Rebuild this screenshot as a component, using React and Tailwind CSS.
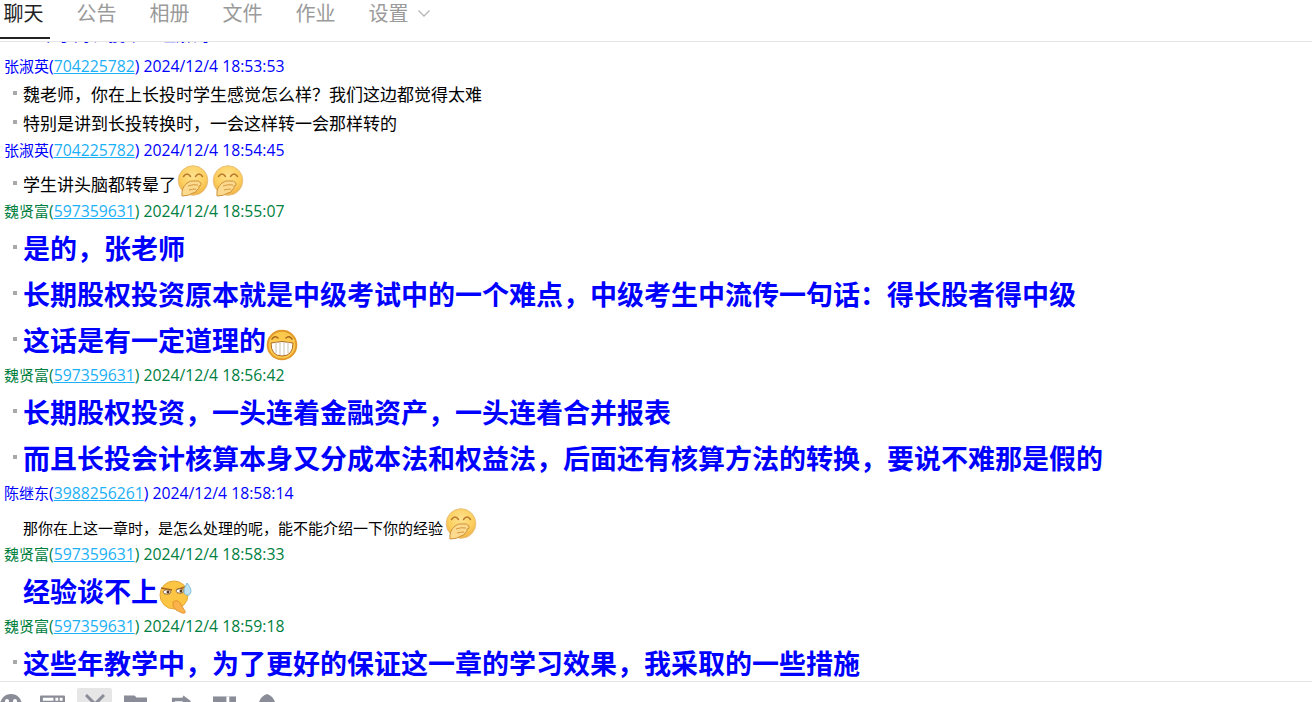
const FONT = "font-['Open_Sans','Noto_Sans_CJK_SC',sans-serif]";

function CoverMouth({ id, className = "" }) {
  return (
    <svg width="32" height="32" viewBox="0 0 32 32" className={`inline-block shrink-0 -translate-y-[4px] ${className}`}>
      <defs>
        <radialGradient id={id} cx="50%" cy="35%" r="65%">
          <stop offset="0%" stopColor="#fee28f" />
          <stop offset="65%" stopColor="#fccf5e" />
          <stop offset="100%" stopColor="#efb044" />
        </radialGradient>
      </defs>
      <circle cx="16" cy="15.500" r="14.800" fill={`url(#${id})`} stroke="#e9c07e" strokeWidth="1" />
      <path d="M6.500 11.500q3.500-5 7 0M18.500 11.500q3.500-5 7 0" fill="none" stroke="#b9772a" strokeWidth="1.500" strokeLinecap="round" />
      <path d="M5 31q-1-8 5-13q4-3 7-2q5-1 7 2q1 3-2 3q1 3-2 4q-1 3-4 3q-4 3-11 3z" fill="#fbd98e" stroke="#cf9339" strokeWidth="1" />
      <path d="M11 21q5-2 10-1M12 25q4-1 7-1" stroke="#cf9339" strokeWidth="0.900" fill="none" />
    </svg>
  );
}

function Grin() {
  return (
    <svg width="32" height="32" viewBox="0 0 32 32" className="inline-block shrink-0 translate-y-[4px]">
      <circle cx="16" cy="16" r="14.300" fill="#fbc94d" stroke="#e19a2a" strokeWidth="2" />
      <path d="M6 10q3-4 6-1M20 9q3-3 6 1" fill="none" stroke="#a8641c" strokeWidth="1.500" strokeLinecap="round" />
      <path d="M5 14q11-3 22 0q0 13-11 13T5 14z" fill="#fff" stroke="#b06a1e" strokeWidth="1" />
      <path d="M10 13v11M14 13v13M18 13v13M22 13v11" stroke="#c9c3b5" strokeWidth="1" />
    </svg>
  );
}

function Think() {
  return (
    <svg width="36" height="36" viewBox="0 0 36 36" className="inline-block shrink-0 translate-y-[4px]">
      <circle cx="16" cy="17" r="14" fill="#fcc544" stroke="#e8a93a" strokeWidth="1" />
      <path d="M3 10l11 2M18 12l9-3" stroke="#a8641c" strokeWidth="1.500" />
      <ellipse cx="9" cy="14" rx="4" ry="2.200" fill="#fff" stroke="#805020" strokeWidth="0.800" />
      <ellipse cx="22" cy="13" rx="4" ry="2.200" fill="#fff" stroke="#805020" strokeWidth="0.800" />
      <circle cx="10" cy="14" r="1.500" fill="#5a3415" />
      <circle cx="23" cy="13" r="1.500" fill="#5a3415" />
      <path d="M29 5q6 7 3 11q-3 3-6-1q-1-4 3-10z" fill="#bfe3f2" stroke="#6fb3d1" strokeWidth="0.800" />
      <path d="M15 24q4-3 7 1l5 8q1 3-3 2l-6-3q-4-3-3-8z" fill="#fbb24a" stroke="#d98a2a" strokeWidth="0.800" />
    </svg>
  );
}

function Header({ name, id, time, color, gap }) {
  return (
    <div className={`h-[24px] ${gap ? "mt-[2px]" : ""} pl-[4px] leading-[25px] text-[15px] ${color} whitespace-pre`}>
      {name}
      <span className="text-[15.750px]">
        (<span className="text-[#1cb0f6] underline">{id}</span>) {time}
      </span>
    </div>
  );
}

function Row({ children, size, h, pt, hidden }) {
  return (
    <div className={`${h} ${pt} pl-[23px] ${size} whitespace-pre`}>
      <div className="relative h-full flex items-center">
        {!hidden && <span className="absolute -left-[10px] top-1/2 -translate-y-[4px] w-[4px] h-[4px] bg-[#a8a8a8]" />}
        {children}
      </div>
    </div>
  );
}

const Big = ({ children, hidden }) => (
  <Row h="h-[46px]" pt="pt-[6px]" size="text-[27px] font-bold text-[#0000ff]" hidden={hidden}>{children}</Row>
);
const Mid = ({ children }) => <Row h="h-[29px]" pt="pt-[4px]" size="text-[17px] text-black">{children}</Row>;

const Tab = ({ children, active }) => (
  <div className={`relative h-[41px] flex items-start w-[50px] pl-[3.500px] mr-[23px] text-[20px] leading-[28px] ${active ? "text-[#222222]" : "text-[#9a9a9a]"}`}>
    <span className="whitespace-pre">{children}</span>
    {active && <span className="absolute left-0 top-[37px] w-[50px] h-[2px] bg-[#222222]" />}
  </div>
);

export default function App() {
  return (
    <div className={`w-[1312px] h-[702px] flex flex-col overflow-hidden bg-white ${FONT}`}>
      <div className="h-[42px] shrink-0 flex border-b border-[#e5e5e5] bg-white">
        <Tab active>聊天</Tab>
        <Tab>公告</Tab>
        <Tab>相册</Tab>
        <Tab>文件</Tab>
        <Tab>作业</Tab>
        <div className="h-[41px] flex items-start pl-[3.500px] text-[20px] leading-[28px] text-[#9a9a9a]">
          <span className="whitespace-pre">设置</span>
          <svg width="14" height="14" viewBox="0 0 14 14" className="ml-[8px] mt-[7px]">
            <path d="M1.500 3.500l5.500 5.500 5.500-5.500" fill="none" stroke="#b5b5b5" strokeWidth="1.300" />
          </svg>
        </div>
      </div>

      <div className="flex-1 min-h-0 overflow-hidden">
        <div className="h-[12px] overflow-hidden relative">
          <div className="absolute left-[23px] -top-[16px] text-[17px] leading-[17px] text-[#0000ff] whitespace-pre">一下子对长投难以理解的</div>
        </div>
        <Header name="张淑英" id="704225782" time="2024/12/4 18:53:53" color="text-[#0000ff]" />
        <Mid>魏老师，你在上长投时学生感觉怎么样？我们这边都觉得太难</Mid>
        <Mid>特别是讲到长投转换时，一会这样转一会那样转的</Mid>
        <Header gap name="张淑英" id="704225782" time="2024/12/4 18:54:45" color="text-[#0000ff]" />
        <Row h="h-[37px]" pt="pt-[9px]" size="text-[17px] text-black">
          学生讲头脑都转晕了<CoverMouth id="cm1" className="ml-[1px]" /><span className="w-[3px]" /><CoverMouth id="cm2" />
        </Row>
        <Header name="魏贤富" id="597359631" time="2024/12/4 18:55:07" color="text-[#008040]" />
        <Big>是的，张老师</Big>
        <Big>长期股权投资原本就是中级考试中的一个难点，中级考生中流传一句话：得长股者得中级</Big>
        <Big>这话是有一定道理的<Grin /></Big>
        <Header gap name="魏贤富" id="597359631" time="2024/12/4 18:56:42" color="text-[#008040]" />
        <Big>长期股权投资，一头连着金融资产，一头连着合并报表</Big>
        <Big>而且长投会计核算本身又分成本法和权益法，后面还有核算方法的转换，要说不难那是假的</Big>
        <Header gap name="陈继东" id="3988256261" time="2024/12/4 18:58:14" color="text-[#0000ff]" />
        <Row h="h-[37px]" pt="pt-[9px]" size="text-[15px] text-black" hidden>
          那你在上这一章时，是怎么处理的呢，能不能介绍一下你的经验<span className="w-[2px]" /><CoverMouth id="cm3" />
        </Row>
        <Header name="魏贤富" id="597359631" time="2024/12/4 18:58:33" color="text-[#008040]" />
        <Big hidden>经验谈不上<Think /></Big>
        <Header gap name="魏贤富" id="597359631" time="2024/12/4 18:59:18" color="text-[#008040]" />
        <Big>这些年教学中，为了更好的保证这一章的学习效果，我采取的一些措施</Big>
      </div>

      <div className="h-[21px] shrink-0 border-t border-[#e5e5e5] flex items-start overflow-hidden bg-white">
        <svg viewBox="0 0 22 22" className="w-[22px] h-[22px] shrink-0 ml-[0px] mt-[12px]"><circle cx="11" cy="11" r="11" fill="#8a8c97" /><circle cx="7" cy="7" r="2" fill="#fff" /><circle cx="15" cy="7" r="2" fill="#fff" /></svg>
        <svg viewBox="0 0 26 22" className="w-[25px] h-[22px] shrink-0 ml-[18px] mt-[13px]"><rect width="26" height="22" rx="1" fill="#8a8c97" /><path d="M3 2.500h11v3H3zM16 2.500h3v3h-3zM20.500 2.500h3v3h-3z" fill="#fff" /></svg>
        <div className="w-[35px] h-[20px] ml-[12px] mt-[6px] bg-[#e6e6e6] rounded-[2px] flex justify-center pt-[6px] shrink-0">
          <svg width="20" height="20" viewBox="0 0 20 20" className="shrink-0"><path d="M1 1l9 9 9-9" fill="none" stroke="#8a8c97" strokeWidth="3" /></svg>
        </div>
        <svg viewBox="0 0 24 22" className="w-[23px] h-[22px] shrink-0 ml-[12px] mt-[13px]"><path d="M0 0h11l2 2h11v20H0z" fill="#8a8c97" /></svg>
        <svg viewBox="0 0 24 22" className="w-[23px] h-[22px] shrink-0 ml-[23px] mt-[13px]"><path d="M2 7V2.500h11L14 0l8 6-3 2-1 1h-3l-2-3H5v1z" fill="#8a8c97" /></svg>
        <svg viewBox="0 0 24 22" className="w-[23px] h-[22px] shrink-0 ml-[20px] mt-[14px]"><rect width="24" height="22" fill="#8a8c97" /><rect x="14" y="0" width="3" height="6" fill="#fff" /></svg>
        <svg viewBox="0 0 18 22" className="w-[18px] h-[22px] shrink-0 ml-[22px] mt-[12px]"><path d="M9 0q6 2 8 8v6H1V8q2-6 8-8z" fill="#8a8c97" /></svg>
      </div>
    </div>
  );
}
